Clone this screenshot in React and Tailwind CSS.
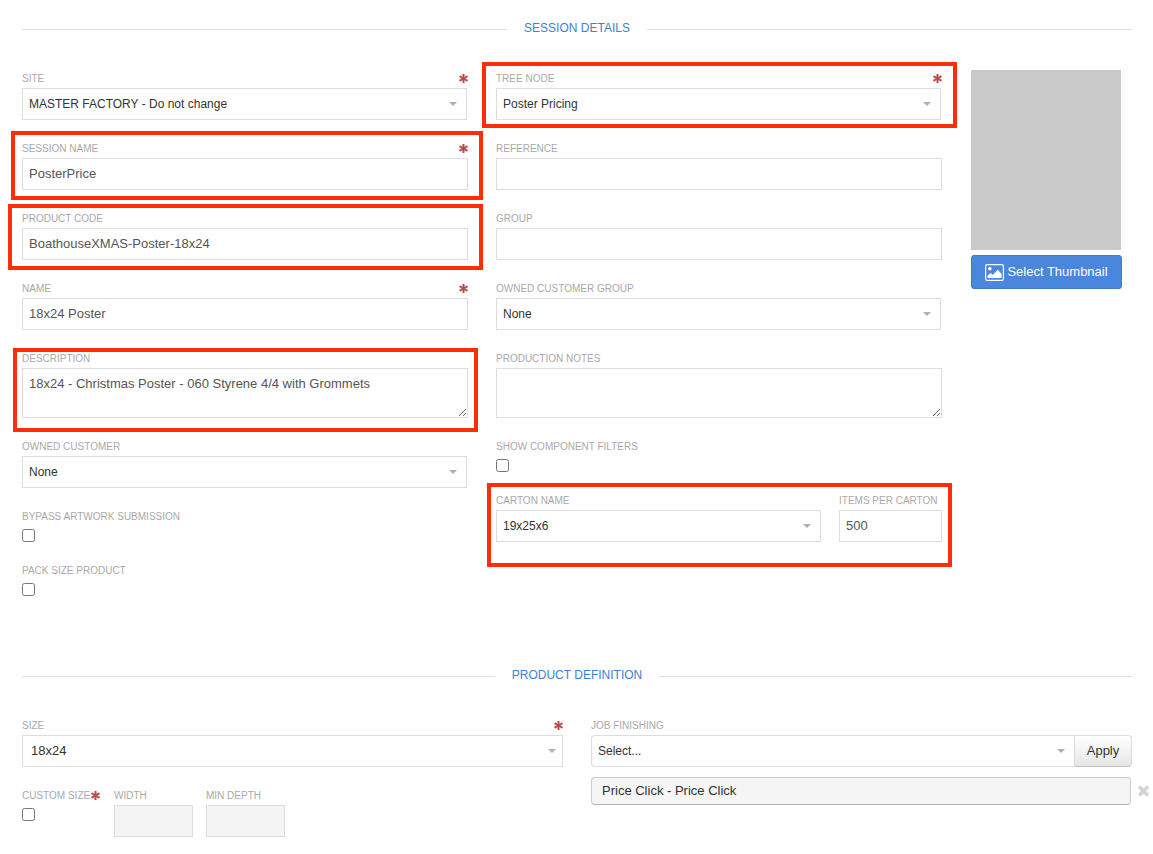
import React from "react";
import { FaAsterisk, FaTimes } from "react-icons/fa";

function Req() {
  return <FaAsterisk stroke="currentColor" strokeWidth={30} className="w-[9px] h-[9px] text-[#bd4b4b]" />;
}

function Label({ children, req }) {
  return (
    <div className="h-[18px] flex items-center justify-between text-[10px] leading-[16px] text-[#a9a9a9] pb-px">
      <span>{children}</span>
      {req ? <Req /> : null}
    </div>
  );
}

function Arrow() {
  return <span className="w-0 h-0 border-x-[4.5px] border-x-transparent border-t-[4px] border-t-[#b0b0b0]" />;
}

function Select({ value, className = "pl-[6px] pr-[9px] text-xs" }) {
  return (
    <div className={`h-8 flex items-center justify-between border border-[#dddddd] bg-white text-[#333333] ${className}`}>
      <span>{value}</span>
      <Arrow />
    </div>
  );
}

function Input({ value }) {
  return (
    <div className="h-8 flex items-center border border-[#dddddd] bg-white px-[6px] text-[13px] text-[#555555]">
      {value}
    </div>
  );
}

function Textarea({ value }) {
  return (
    <textarea
      readOnly
      defaultValue={value}
      className="block w-full h-[50px] border border-[#dddddd] bg-white px-[6px] py-[6px] text-[13px] leading-[18px] text-[#555555] outline-none"
    />
  );
}

function Check() {
  return <input type="checkbox" readOnly className="block w-[13px] h-[13px] mt-[3px]" />;
}

function Heading({ children, className = "" }) {
  return (
    <div className={`flex items-center h-[18px] ${className}`}>
      <div className="flex-1 h-px bg-[#dddddd] mt-[2px]" />
      <div className="px-[17px] text-xs text-[#3f7fd4]">{children}</div>
      <div className="flex-1 h-px bg-[#dddddd] mt-[2px]" />
    </div>
  );
}

function Mark({ className }) {
  return <div className={`absolute border-4 border-[#ff2d08] pointer-events-none ${className}`} />;
}

function PictureIcon() {
  return (
    <svg viewBox="0 0 19 17" className="w-[19px] h-[17px]" aria-hidden="true">
      <rect x="0.6" y="0.6" width="17.8" height="15.8" rx="1.6" fill="none" stroke="white" strokeWidth="1.2" />
      <circle cx="4.8" cy="4.8" r="1.8" fill="white" />
      <path d="M2.5 14v-2.2l3-2.8 2.2 2 5-5.2 3.8 4V14z" fill="white" />
    </svg>
  );
}

export default function App() {
  return (
    <div
      className="relative h-[854px] overflow-hidden bg-white px-[22px] pt-[19px]"
      style={{ fontFamily: '"Liberation Sans", Arial, sans-serif' }}
    >
      <div className="w-[1110px]">
        <Heading>SESSION DETAILS</Heading>

        <div className="flex mt-[33px]">
          <div className="w-[446px]">
            <Label req>SITE</Label>
            <div className="mr-px">
              <Select value="MASTER FACTORY - Do not change" />
            </div>
            <div className="mt-5">
              <Label req>SESSION NAME</Label>
              <Input value="PosterPrice" />
            </div>
            <div className="mt-5">
              <Label>PRODUCT CODE</Label>
              <Input value="BoathouseXMAS-Poster-18x24" />
            </div>
            <div className="mt-5">
              <Label req>NAME</Label>
              <Input value="18x24 Poster" />
            </div>
            <div className="mt-5">
              <Label>DESCRIPTION</Label>
              <Textarea value="18x24 - Christmas Poster - 060 Styrene 4/4 with Grommets" />
            </div>
            <div className="mt-5 mr-px">
              <Label>OWNED CUSTOMER</Label>
              <Select value="None" />
            </div>
            <div className="mt-5">
              <Label>BYPASS ARTWORK SUBMISSION</Label>
              <Check />
            </div>
            <div className="mt-5">
              <Label>PACK SIZE PRODUCT</Label>
              <Check />
            </div>
          </div>

          <div className="w-[446px] ml-7">
            <Label req>TREE NODE</Label>
            <div className="mr-px">
              <Select value="Poster Pricing" />
            </div>
            <div className="mt-5">
              <Label>REFERENCE</Label>
              <Input />
            </div>
            <div className="mt-5">
              <Label>GROUP</Label>
              <Input />
            </div>
            <div className="mt-5 mr-px">
              <Label>OWNED CUSTOMER GROUP</Label>
              <Select value="None" />
            </div>
            <div className="mt-5">
              <Label>PRODUCTION NOTES</Label>
              <Textarea value="" />
            </div>
            <div className="mt-5">
              <Label>SHOW COMPONENT FILTERS</Label>
              <Check />
            </div>
            <div className="flex mt-5">
              <div className="w-[325px]">
                <Label>CARTON NAME</Label>
                <Select value="19x25x6" />
              </div>
              <div className="w-[103px] ml-[18px]">
                <Label>ITEMS PER CARTON</Label>
                <Input value="500" />
              </div>
            </div>
          </div>

          <div className="w-[151px] ml-[29px]">
            <div className="w-[150px] h-[180px] bg-[#c9c9c9]" />
            <div className="mt-[5px] h-[34px] flex items-center justify-center gap-[3px] rounded-[3px] border border-[#4279c9] bg-[#4a86db] text-[13px] text-white">
              <PictureIcon />
              <span>Select Thumbnail</span>
            </div>
          </div>
        </div>

        <Heading className="mt-[70px]">PRODUCT DEFINITION</Heading>

        <div className="flex mt-[33px]">
          <div className="w-[541px]">
            <Label req>SIZE</Label>
            <Select value="18x24" className="pl-2 pr-[6px] text-[13px]" />
            <div className="flex mt-5">
              <div className="w-[92px]">
                <div className="h-[18px] flex items-center gap-px text-[10px] text-[#a9a9a9] pb-px">
                  <span>CUSTOM SIZE</span>
                  <Req />
                </div>
                <Check />
              </div>
              <div className="w-[79px]">
                <Label>WIDTH</Label>
                <div className="h-8 border border-[#dddddd] bg-[#f4f4f4]" />
              </div>
              <div className="w-[79px] ml-[13px]">
                <Label>MIN DEPTH</Label>
                <div className="h-8 border border-[#dddddd] bg-[#f4f4f4]" />
              </div>
            </div>
          </div>

          <div className="w-[541px] ml-7">
            <Label>JOB FINISHING</Label>
            <div className="flex h-8">
              <div className="flex-1 flex items-center justify-between rounded-l-[4px] border border-r-0 border-[#dddddd] bg-white pl-[6px] pr-[9px] text-xs text-[#333333]">
                <span>Select...</span>
                <Arrow />
              </div>
              <div className="w-[58px] flex items-center justify-center rounded-r-[4px] border border-[#dddddd] border-b-[#c4c4c4] bg-gradient-to-b from-white to-[#e6e6e6] text-[13px] text-[#333333]">
                Apply
              </div>
            </div>
            <div className="relative mt-[10px] mr-px h-7 flex items-center rounded-[4px] border border-[#cccccc] border-b-[#b3b3b3] bg-[#f5f5f5] pl-[10px] text-[13px] text-[#333333]">
              Price Click - Price Click
              <FaTimes stroke="currentColor" strokeWidth={40} className="absolute -right-[20px] top-[6px] w-[13px] h-[14px] text-[#d4d4d4]" />
            </div>
          </div>
        </div>
      </div>

      <Mark className="left-[482px] top-[62px] w-[475px] h-[66px]" />
      <Mark className="left-[11px] top-[131px] w-[472px] h-[69px]" />
      <Mark className="left-[8px] top-[204px] w-[475px] h-[66px]" />
      <Mark className="left-[13px] top-[348px] w-[465px] h-[84px]" />
      <Mark className="left-[487px] top-[483px] w-[465px] h-[84px]" />
    </div>
  );
}
